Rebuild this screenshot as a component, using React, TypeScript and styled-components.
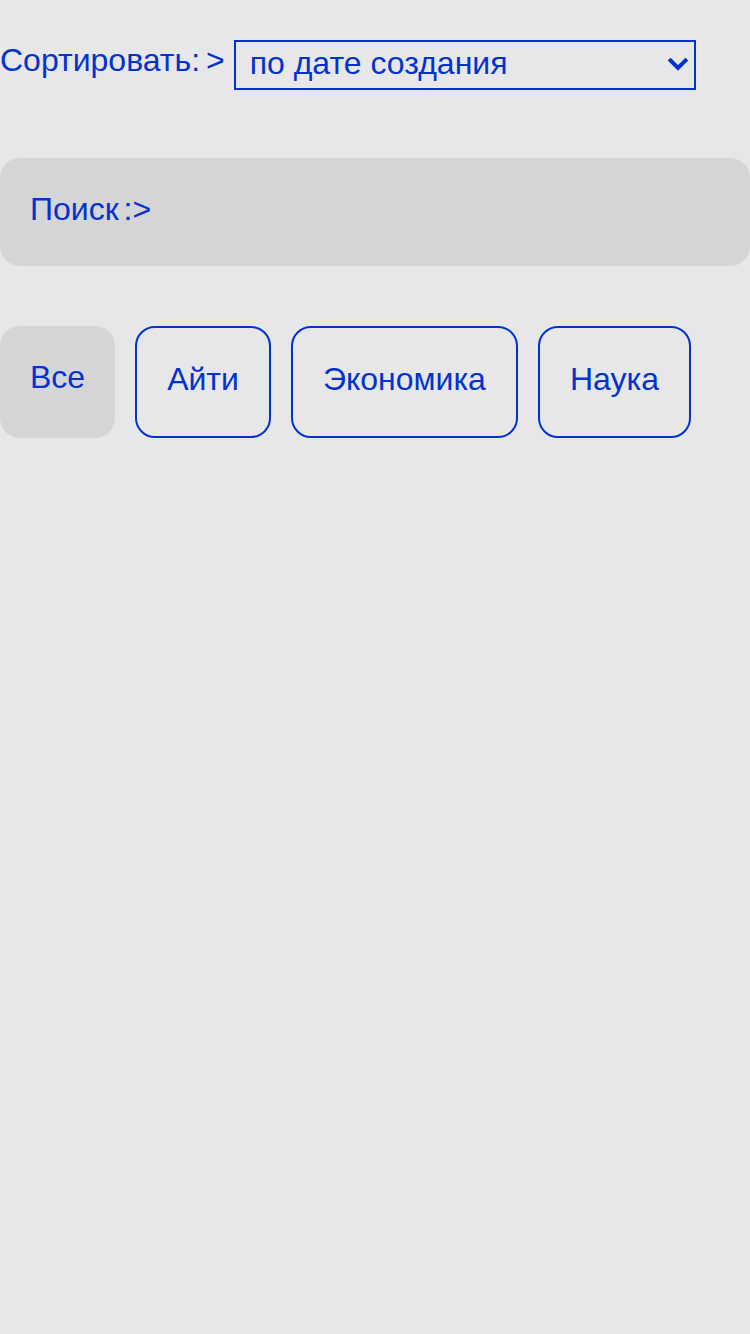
import React, { useState } from "react";
import styled, { createGlobalStyle } from "styled-components";

const BLUE = "#0033cc";

const GlobalStyle = createGlobalStyle`
  html, body {
    margin: 0;
    padding: 0;
    background: #e7e7e9;
  }
  body {
    min-height: 1334px;
    font-family: "Liberation Sans", Arial, sans-serif;
    color: ${BLUE};
  }
`;

const Page = styled.div`
  display: flex;
  flex-direction: column;
  padding-top: 40px;
  font-family: "Liberation Sans", Arial, sans-serif;
`;

const SortRow = styled.div`
  display: flex;
  align-items: flex-start;
  gap: 9px;
`;

const SortLabel = styled.label`
  font-size: 32px;
  line-height: 37px;
  margin-top: 2px;
  word-spacing: -3px;
  color: ${BLUE};
  white-space: pre;
`;

const SelectWrap = styled.div`
  position: relative;
  width: 462px;
  height: 50px;
`;

const Select = styled.select`
  appearance: none;
  -webkit-appearance: none;
  box-sizing: border-box;
  width: 100%;
  height: 100%;
  margin: 0;
  padding: 0 40px 4px 14px;
  border: 2px solid ${BLUE};
  border-radius: 0;
  background: transparent;
  color: ${BLUE};
  font-family: "Liberation Sans", Arial, sans-serif;
  font-size: 32px;
  outline: none;
`;

const Chevron = styled.svg`
  position: absolute;
  right: 8px;
  top: 18px;
  width: 20px;
  height: 13px;
  pointer-events: none;
`;

const SearchBox = styled.input`
  box-sizing: border-box;
  width: 750px;
  height: 108px;
  margin-top: 68px;
  padding: 30px 30px 36px;
  border: none;
  border-radius: 20px;
  background: #d5d5d7;
  color: ${BLUE};
  font-family: "Liberation Sans", Arial, sans-serif;
  font-size: 32px;
  line-height: 42px;
  word-spacing: -4px;
  outline: none;

  &::placeholder {
    color: ${BLUE};
    opacity: 1;
  }
`;

const Chips = styled.div`
  display: flex;
  align-items: stretch;
  gap: 20px;
  margin-top: 60px;
`;

const Chip = styled.button<{ $active?: boolean }>`
  box-sizing: border-box;
  margin: 0;
  padding: 30px 30px 36px;
  border: ${(p) => (p.$active ? "none" : `2px solid ${BLUE}`)};
  border-radius: 20px;
  background: ${(p) => (p.$active ? "#d5d5d7" : "transparent")};
  color: ${BLUE};
  font-family: "Liberation Sans", Arial, sans-serif;
  font-size: 32px;
  line-height: 42px;
  display: flex;
  align-items: flex-start;
  cursor: pointer;
`;

const categories = ["Все", "Айти", "Экономика", "Наука"];

export default function App() {
  const [active, setActive] = useState("Все");
  const [sort, setSort] = useState("created");
  return (
    <>
      <GlobalStyle />
      <Page>
        <SortRow>
          <SortLabel htmlFor="sort">Сортировать: &gt;</SortLabel>
          <SelectWrap>
            <Select id="sort" value={sort} onChange={(e) => setSort(e.target.value)}>
              <option value="created">по дате создания</option>
              <option value="updated">по дате изменения</option>
              <option value="name">по названию</option>
            </Select>
            <Chevron viewBox="0 0 20 13">
              <path
                d="M2.5 2.5 L10 10 L17.5 2.5"
                fill="none"
                stroke={BLUE}
                strokeWidth="4"
                strokeLinecap="square"
                strokeLinejoin="miter"
              />
            </Chevron>
          </SelectWrap>
        </SortRow>
        <SearchBox placeholder="Поиск :>" />
        <Chips>
          {categories.map((c) => (
            <Chip key={c} $active={active === c} onClick={() => setActive(c)}>
              {c}
            </Chip>
          ))}
        </Chips>
      </Page>
    </>
  );
}
